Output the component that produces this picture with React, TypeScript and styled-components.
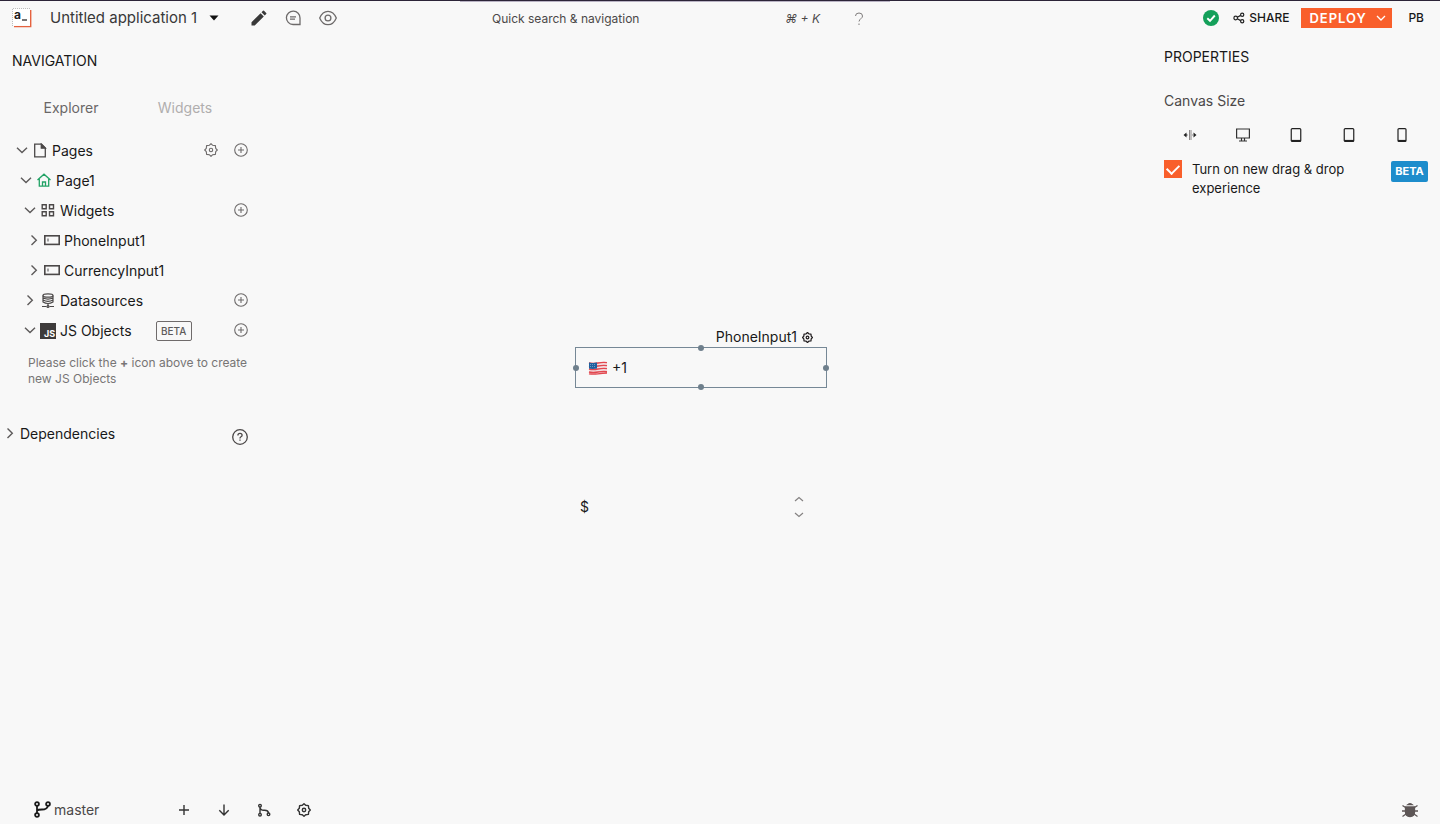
import React from "react";
import styled, { createGlobalStyle } from "styled-components";

const GlobalStyle = createGlobalStyle`
  * { box-sizing: border-box; }
  body {
    margin: 0;
    background: #f8f8f8;
    color: #191919;
    font-family: Inter, "Noto Sans", sans-serif;
    font-size: 14px;
    line-height: 20px;
  }
  button, input { font: inherit; color: inherit; }
  svg { display: block; flex: none; }
`;

const Page = styled.div`
  min-height: 100vh;
  display: flex;
  flex-direction: column;
`;

const Button = styled.button`
  display: flex;
  align-items: center;
  justify-content: center;
  padding: 0;
  border: 0;
  background: none;
  cursor: pointer;
`;

/* Header */
const Header = styled.header`
  display: grid;
  grid-template-columns: 460px 430px 1fr;
  height: 35px;
  border-top: 1px solid #2c2438;
`;

const HeaderLeft = styled.div`
  display: flex;
  align-items: center;
  padding-left: 12px;
`;

const AppName = styled(Button)`
  gap: 12px;
  margin: 0 32px 0 18px;
  color: #393939;
  font-size: 15px;
`;

const HeaderTools = styled.div`
  display: flex;
  align-items: center;
  gap: 16px;
`;

const SearchArea = styled.div`
  display: flex;
  align-items: center;
  justify-content: space-between;
  padding: 0 26px 0 32px;
  border-top: 1px solid #b9b3c4;
`;

const Search = styled(Button)`
  justify-content: space-between;
  width: 328px;
  color: #4b4848;
  font-size: 12px;
`;

const Shortcut = styled.span`
  font-size: 12px;
  font-style: italic;
`;

const HeaderRight = styled.div`
  display: flex;
  align-items: center;
  justify-content: flex-end;
  padding-right: 16px;
`;

const Share = styled(Button)`
  gap: 4px;
  margin: 0 12px 0 14px;
  font-size: 12px;
  font-weight: 500;
`;

const Deploy = styled(Button)`
  justify-content: space-between;
  width: 91px;
  height: 20px;
  margin-right: 16px;
  padding: 0 4px 0 8px;
  background: #f95f2b;
  color: #fff;
  font-size: 13px;
  font-weight: 600;
  letter-spacing: 1px;
`;

const Profile = styled(Button)`
  font-size: 12px;
  font-weight: 500;
`;

/* Body */
const Body = styled.div`
  flex: 1;
  display: flex;
  padding-top: 1px;
`;

const Sidebar = styled.aside`
  width: 256px;
  padding-top: 15px;
`;

const PanelTitle = styled.h2`
  margin: 0;
  font-size: 14px;
  font-weight: 400;
`;

const SidebarTitle = styled(PanelTitle)`
  padding-left: 12px;
`;

const Tabs = styled.div`
  display: grid;
  grid-template-columns: 1fr 1fr;
  height: 56px;
  margin-top: 9px;
  padding: 0 14px;
`;

const Tab = styled(Button)<{ $active?: boolean }>`
  color: ${(p) => (p.$active ? "#6a6767" : "#b0aeae")};
`;

const Tree = styled.ul`
  margin: 0;
  padding: 0;
  list-style: none;
`;

const Row = styled.li<{ $depth: number }>`
  display: flex;
  align-items: center;
  height: 30px;
  padding: 0 8px 0 ${(p) => 16 + p.$depth * 4}px;
`;

const RowLabel = styled(Button)`
  gap: 4px;
`;

const RowActions = styled.div`
  display: flex;
  gap: 16px;
  margin-left: auto;
  padding-bottom: 2px;
`;

const OutlineTag = styled.span`
  display: flex;
  align-items: center;
  justify-content: center;
  width: 36px;
  height: 20px;
  margin-left: 24px;
  border: 1px solid #6f6b6b;
  border-radius: 2px;
  color: #5d5a5a;
  font-size: 10px;
  font-weight: 500;
`;

const EmptyHint = styled.p`
  margin: 9px 0 32px;
  padding: 0 8px 0 28px;
  color: #777575;
  font-size: 12px;
  line-height: 16px;
`;

const Dependencies = styled.div`
  display: flex;
  align-items: center;
  justify-content: space-between;
  height: 30px;
  padding: 0 8px 0 4px;
`;

/* Canvas */
const Canvas = styled.main`
  position: relative;
  flex: 1;
`;

const PhoneWidget = styled.section`
  position: absolute;
  top: 311px;
  left: calc(50% - 129px);
  display: flex;
  align-items: center;
  gap: 6px;
  width: 252px;
  height: 41px;
  padding: 0 12px;
  border: 1px solid #768896;
`;

const WidgetTag = styled(Button)`
  position: absolute;
  right: 13px;
  bottom: 40px;
  gap: 5px;
`;

const Handle = styled.span<{ $x: number; $y: number }>`
  position: absolute;
  left: ${(p) => p.$x}%;
  top: ${(p) => p.$y}%;
  width: 6px;
  height: 6px;
  margin: -3px;
  border-radius: 50%;
  background: #6e7f8c;
`;

const DialCode = styled(Button)`
  gap: 4px;
`;

const WidgetInput = styled.input`
  flex: 1;
  min-width: 0;
  border: 0;
  outline: 0;
  background: none;
`;

const CurrencyWidget = styled.section`
  position: absolute;
  top: 451px;
  left: calc(50% - 124px);
  display: flex;
  align-items: center;
  gap: 6px;
  width: 224px;
  height: 40px;
`;

const Stepper = styled.div`
  display: flex;
  flex-direction: column;
  gap: 6px;
`;

/* Properties */
const Properties = styled.aside`
  width: 288px;
  padding: 11px 12px;
`;

const FieldLabel = styled.h3`
  margin: 24px 0 14px;
  color: #4b4848;
  font-size: 14px;
  font-weight: 400;
`;

const Sizes = styled.div`
  display: grid;
  grid-template-columns: repeat(5, 1fr);
  height: 20px;
`;

const DragDrop = styled.div`
  display: flex;
  align-items: flex-start;
  gap: 10px;
  margin-top: 15px;
`;

const DragDropLabel = styled.label`
  flex: 1;
  font-size: 13px;
  line-height: 19px;
`;

const CheckBox = styled.input`
  appearance: none;
  display: grid;
  place-items: center;
  width: 18px;
  height: 18px;
  margin: 0;
  background: #f95f2b;
  &:checked::after {
    content: "";
    width: 10px;
    height: 6px;
    margin-bottom: 3px;
    border: solid #fff;
    border-width: 0 0 2px 2px;
    transform: rotate(-45deg);
  }
`;

const SolidTag = styled.span`
  width: 37px;
  height: 21px;
  margin-top: 1px;
  border-radius: 2px;
  background: #1d8dcc;
  color: #fff;
  font-size: 11px;
  font-weight: 700;
  line-height: 21px;
  text-align: center;
`;

/* Footer */
const Footer = styled.footer`
  display: flex;
  align-items: center;
  height: 28px;
  padding: 0 20px 0 34px;
`;

const Branch = styled(Button)`
  justify-content: flex-start;
  gap: 3px;
  width: 130px;
  color: #4b4848;
`;

const GitButton = styled(Button)`
  width: 40px;
  height: 28px;
`;

const BugButton = styled(Button)`
  margin-left: auto;
`;

/* Icons */
type IconProps = {
  w: number;
  h?: number;
  color?: string;
  sw?: number;
  box?: string;
  children: React.ReactNode;
};

const Icon = ({ w, h = w, color = "#6d6a6a", sw = 1, box, children }: IconProps) => (
  <svg
    width={w}
    height={h}
    viewBox={box ?? `0 0 ${w} ${h}`}
    fill="none"
    stroke={color}
    strokeWidth={sw}
    aria-hidden="true"
  >
    {children}
  </svg>
);

const Chevron = ({ open }: { open?: boolean }) => (
  <Icon w={12} h={12} sw={1.4} color="#5d5a5a">
    <path d={open ? "M1 2.7L6 7.500L11 2.7" : "M3.5 .5L8.300 5.300L3.5 10.100"} />
  </Icon>
);

const PlusCircle = () => (
  <Icon w={14} sw={1.1}>
    <circle cx="7" cy="7" r="6.3" />
    <path d="M7 4v6M4 7h6" />
  </Icon>
);

const Gear = ({ size = 14, color = "#6d6a6a", sw = 1.1 }) => (
  <Icon w={size} box="0 0 14 14" color={color} sw={sw}>
    <path
      strokeLinejoin="round"
      d="M7 .7L8.7 2.3L11.4 2.6L11.7 5.3L13.3 7L11.7 8.7L11.4 11.4L8.7 11.7L7 13.3L5.3 11.7L2.6 11.4L2.3 8.7L.7 7L2.3 5.3L2.6 2.6L5.3 2.3Z"
    />
    <circle cx="7" cy="7" r="1.7" />
  </Icon>
);

const Logo = () => (
  <svg width="20" height="20" viewBox="0 0 20 20" aria-hidden="true">
    <path d="M.5 18V.5H18" fill="none" stroke="#bdbdbd" strokeDasharray="1 1" />
    <path d="M1 1H18V17.5H1Z" fill="#fff" />
    <path d="M2 18.6H18.7V2" fill="none" stroke="#e5623f" strokeWidth="1.4" />
    <text x="2" y="11" fontSize="12" fontWeight="700" fill="#1c1c1c">a</text>
    <path d="M10 12h5" stroke="#1c1c1c" strokeWidth="1.2" />
  </svg>
);

const InputIcon = () => (
  <Icon w={16} h={16} color="#4b4848" sw={1.6}>
    <rect x=".8" y="2.8" width="14.4" height="8.6" />
    <path d="M4 5.5v3" strokeWidth="1" />
  </Icon>
);

const Device = ({ w }: { w: number }) => (
  <Icon w={14} h={16} color="#222" sw={1.2}>
    <rect x={(14 - w) / 2} y="1.6" width={w} height="12.8" rx="1" />
    <path d={`M${(14 - w) / 2} 13.7h${w}`} strokeWidth="1.6" />
  </Icon>
);

const Flag = () => (
  <svg width="20" height="14" viewBox="0 0 20 14" aria-hidden="true">
    <path d="M1 1.5Q5 2.5 10 1.5T19 1V12Q14 11.5 10 12.5T1 12.5Z" fill="#f3dfe2" />
    <path
      d="M1 2Q5 3 10 2T19 1.6M1 5Q5 6 10 5T19 4.6M1 8Q5 9 10 8T19 7.6M1 11Q5 12 10 11T19 10.6M1 12.8Q5 13.5 10 12.8T19 12"
      fill="none"
      stroke="#e2474f"
      strokeWidth="1.3"
    />
    <path d="M1 1.4Q5 2.4 9 1.5V7.5Q5 8.4 1 7.6Z" fill="#1f5f9e" />
    <path d="M2 3.5h6M2 5.5h6" stroke="#8fb2d3" strokeWidth=".7" strokeDasharray="1 1" />
  </svg>
);

const PageIcon = () => (
  <Icon w={16} color="#4b4848" sw={1.3}>
    <path d="M2.7 1.2H9.5L13.3 5V13.800H2.7Z" />
    <path d="M9.3 1.2V5.2H13.3Z" fill="#4b4848" />
  </Icon>
);

const HomeIcon = () => (
  <Icon w={16} color="#22a366" sw={1.3}>
    <path d="M1.5 7L8 1.2L14.5 7M3.3 6V13.2H12.7V6M6.5 13V9H9.5V13" />
  </Icon>
);

const GridIcon = () => (
  <Icon w={16} color="#4b4848" sw={1.4}>
    <path d="M2.2 1.700H6.200V5.700H2.2ZM9.500 1.700H13.500V5.700H9.500ZM2.2 8.700H6.200V12.700H2.2ZM9.500 8.700H13.500V12.700H9.500Z" />
  </Icon>
);

const DatabaseIcon = () => (
  <Icon w={16} color="#4b4848" sw={1.2} box="0 .5 16 16">
    <ellipse cx="8" cy="3" rx="5" ry="1.7" />
    <path d="M3 3V9.5Q8 12.5 13 9.5V3M3 5.2Q8 8 13 5.2M3 7.4Q8 10.2 13 7.4M8 11.5V14M2 14H6.5M9.5 14H14" />
    <circle cx="8" cy="14" r="1" />
  </Icon>
);

const JsIcon = () => (
  <svg width="16" height="16" viewBox="0 0 16 16" aria-hidden="true">
    <path d="M0 0H16V16H0Z" fill="#3d3a3a" />
    <text x="4" y="14" fontSize="9" fontWeight="700" fill="#fff">JS</text>
  </svg>
);

type Node = {
  label: string;
  depth: number;
  open?: boolean;
  icon: React.ReactNode;
  gear?: boolean;
  add?: boolean;
  beta?: boolean;
};

const nodes: Node[] = [
  { label: "Pages", depth: 0, open: true, icon: <PageIcon />, gear: true, add: true },
  { label: "Page1", depth: 1, open: true, icon: <HomeIcon /> },
  { label: "Widgets", depth: 2, open: true, icon: <GridIcon />, add: true },
  { label: "PhoneInput1", depth: 3, icon: <InputIcon /> },
  { label: "CurrencyInput1", depth: 3, icon: <InputIcon /> },
  { label: "Datasources", depth: 2, icon: <DatabaseIcon />, add: true },
  { label: "JS Objects", depth: 2, open: true, icon: <JsIcon />, add: true, beta: true },
];

const TopBar = () => (
  <Header>
    <HeaderLeft>
      <Logo />
      <AppName>
        Untitled application 1
        <svg width="10" height="6" viewBox="0 0 10 6" aria-hidden="true">
          <path d="M.5 .5H9.5L5 5.5Z" fill="#111" />
        </svg>
      </AppName>
      <HeaderTools>
        <Button aria-label="Edit">
          <svg width="16" height="16" viewBox="0 0 16 16" fill="#393939" aria-hidden="true">
            <path d="M.5 12.3L9.6 3.2L12.8 6.4L3.7 15.5H.5ZM10.5 2.3L12 .8Q12.5 .3 13 .8L15.2 3Q15.7 3.5 15.2 4L13.7 5.5Z" />
          </svg>
        </Button>
        <Button aria-label="Comments">
          <Icon w={20} h={16} sw={1.3}>
            <path d="M17 14.5H10A6.8 6.7 0 1 1 17 8ZM7 6.8H13M7 9.2H12" />
          </Icon>
        </Button>
        <Button aria-label="Preview">
          <Icon w={18} h={16} sw={1.3}>
            <path d="M.7 8Q3.5 1.3 9 1.3T17.3 8Q14.5 14.7 9 14.7T.7 8Z" />
            <circle cx="9" cy="8" r="2.9" />
          </Icon>
        </Button>
      </HeaderTools>
    </HeaderLeft>
    <SearchArea>
      <Search>
        Quick search &amp; navigation
        <Shortcut>⌘ + K</Shortcut>
      </Search>
      <Button aria-label="Help">
        <Icon w={10} h={14} color="#7d7a7a">
          <path d="M1.5 4Q1.5 1 5 1T8.5 4Q8.5 5.5 7 6.5T5 9.5M5 11.5V13" />
        </Icon>
      </Button>
    </SearchArea>
    <HeaderRight>
      <svg width="16" height="16" viewBox="0 0 16 16" aria-hidden="true">
        <circle cx="8" cy="8" r="8" fill="#14a05a" />
        <path d="M4.3 8.3L7 10.8L11.8 5.5" fill="none" stroke="#fff" strokeWidth="1.9" />
      </svg>
      <Share>
        <Icon w={12} color="#222" sw={1.2}>
          <circle cx="2.7" cy="6" r="1.8" />
          <circle cx="9.2" cy="2.7" r="1.6" />
          <circle cx="9.2" cy="9.3" r="1.6" />
          <path d="M4.3 5.2L7.7 3.4M4.3 6.8L7.7 8.6" />
        </Icon>
        SHARE
      </Share>
      <Deploy>
        DEPLOY
        <Icon w={12} h={12} color="#fff" sw={1.3}>
          <path d="M1 4L5 8L9 4" />
        </Icon>
      </Deploy>
      <Profile>PB</Profile>
    </HeaderRight>
  </Header>
);

const Explorer = () => (
  <Sidebar>
    <SidebarTitle>NAVIGATION</SidebarTitle>
    <Tabs role="tablist">
      <Tab role="tab" aria-selected="true" $active>Explorer</Tab>
      <Tab role="tab" aria-selected="false">Widgets</Tab>
    </Tabs>
    <Tree>
      {nodes.map((n) => (
        <Row key={n.label} $depth={n.depth}>
          <RowLabel>
            <Chevron open={n.open} />
            {n.icon}
            {n.label}
          </RowLabel>
          {n.beta && <OutlineTag>BETA</OutlineTag>}
          <RowActions>
            {n.gear && <Button aria-label="Page settings"><Gear /></Button>}
            {n.add && <Button aria-label={`Add to ${n.label}`}><PlusCircle /></Button>}
          </RowActions>
        </Row>
      ))}
    </Tree>
    <EmptyHint>
      Please click the <b>+</b> icon above to create new JS Objects
    </EmptyHint>
    <Dependencies>
      <RowLabel>
        <Chevron />
        Dependencies
      </RowLabel>
      <Button aria-label="About dependencies">
        <Icon w={16} h={22} color="#4b4848" sw={1.3}>
          <circle cx="8" cy="14" r="7.3" />
          <path d="M5.9 12.5Q5.9 10.4 8 10.4T10.1 12.3Q10.1 13.2 9 13.8T8 15.5M8 16.5V17.8" />
        </Icon>
      </Button>
    </Dependencies>
  </Sidebar>
);

const Workspace = () => (
  <Canvas>
    <PhoneWidget>
      <WidgetTag>
        PhoneInput1
        <Gear size={11} color="#231f20" sw={1.6} />
      </WidgetTag>
      <DialCode>
        <Flag />
        +1
      </DialCode>
      <WidgetInput type="tel" aria-label="Phone number" />
      <Handle $x={50} $y={0} />
      <Handle $x={100} $y={50} />
      <Handle $x={50} $y={100} />
      <Handle $x={0} $y={50} />
    </PhoneWidget>
    <CurrencyWidget>
      <Button>$</Button>
      <WidgetInput type="text" aria-label="Amount" />
      <Stepper>
        <Button aria-label="Increase">
          <Icon w={10} h={10} color="#858282" sw={1.2}><path d="M1 7L5 3.5L9 7" /></Icon>
        </Button>
        <Button aria-label="Decrease">
          <Icon w={10} h={10} color="#858282" sw={1.2}><path d="M1 3L5 6.5L9 3" /></Icon>
        </Button>
      </Stepper>
    </CurrencyWidget>
  </Canvas>
);

const PropertyPane = () => (
  <Properties>
    <PanelTitle>PROPERTIES</PanelTitle>
    <FieldLabel>Canvas Size</FieldLabel>
    <Sizes>
      <Button aria-label="Fluid">
        <Icon w={14} h={16} color="#8b8888">
          <path d="M6.500 3V13M8 3V13" />
          <path d="M.5 8L3.500 5.5V10.5ZM13.5 8L10.500 5.5V10.5ZM3 7.500H4.500V8.500H3ZM9.500 7.500H11V8.500H9.500Z" fill="#222" stroke="none" />
        </Icon>
      </Button>
      <Button aria-label="Desktop">
        <Icon w={14} h={16} color="#333" sw={1.2}>
          <path d="M.6 2H13.4V11H.6ZM5.5 11V14M8.5 11V14M3 14H11" />
        </Icon>
      </Button>
      <Button aria-label="Tablet large"><Device w={9.5} /></Button>
      <Button aria-label="Tablet"><Device w={9.5} /></Button>
      <Button aria-label="Mobile"><Device w={8} /></Button>
    </Sizes>
    <DragDrop>
      <CheckBox type="checkbox" id="drag-drop" defaultChecked />
      <DragDropLabel htmlFor="drag-drop">Turn on new drag &amp; drop experience</DragDropLabel>
      <SolidTag>BETA</SolidTag>
    </DragDrop>
  </Properties>
);

const StatusBar = () => (
  <Footer>
    <Branch>
      <Icon w={17} h={18} color="#191919" sw={1.8}>
        <circle cx="3" cy="3" r="1.9" />
        <circle cx="3" cy="14" r="1.9" />
        <circle cx="14" cy="3" r="1.9" />
        <path d="M3 5V12M3 9.5Q4 8.5 8 8.5Q13 8.5 14 5" />
      </Icon>
      master
    </Branch>
    <GitButton aria-label="Commit">
      <Icon w={12} color="#333" sw={1.4}><path d="M6 1V11M1 6H11" /></Icon>
    </GitButton>
    <GitButton aria-label="Pull">
      <Icon w={12} color="#333" sw={1.4}><path d="M6 .5V11M1.3 6.3L6 11L10.7 6.3" /></Icon>
    </GitButton>
    <GitButton aria-label="Merge">
      <Icon w={14} color="#333" sw={1.4}>
        <circle cx="3" cy="2.7" r="1.3" />
        <circle cx="3" cy="11.7" r="1.3" />
        <circle cx="11.5" cy="11.3" r="1.3" />
        <path d="M3 4V10.5M3 4Q3.5 7.5 7 7.3Q11 7 11.5 10" />
      </Icon>
    </GitButton>
    <GitButton aria-label="Git settings"><Gear color="#333" sw={1.4} /></GitButton>
    <BugButton aria-label="Debugger">
      <Icon w={20} h={16} color="#5d5656" sw={1.3}>
        <path d="M5.5 5H14.5V10Q14.5 14.5 10 14.5T5.5 10Z" fill="#5d5656" />
        <path d="M8 2.5Q10 1 12 2.5ZM2.5 3.5L5.5 5.5M17.5 3.5L14.5 5.5M2 9H5.5M14.5 9H18M2.5 14.5L6 12M17.5 14.5L14 12" />
      </Icon>
    </BugButton>
  </Footer>
);

export default function App() {
  return (
    <Page>
      <GlobalStyle />
      <TopBar />
      <Body>
        <Explorer />
        <Workspace />
        <PropertyPane />
      </Body>
      <StatusBar />
    </Page>
  );
}
